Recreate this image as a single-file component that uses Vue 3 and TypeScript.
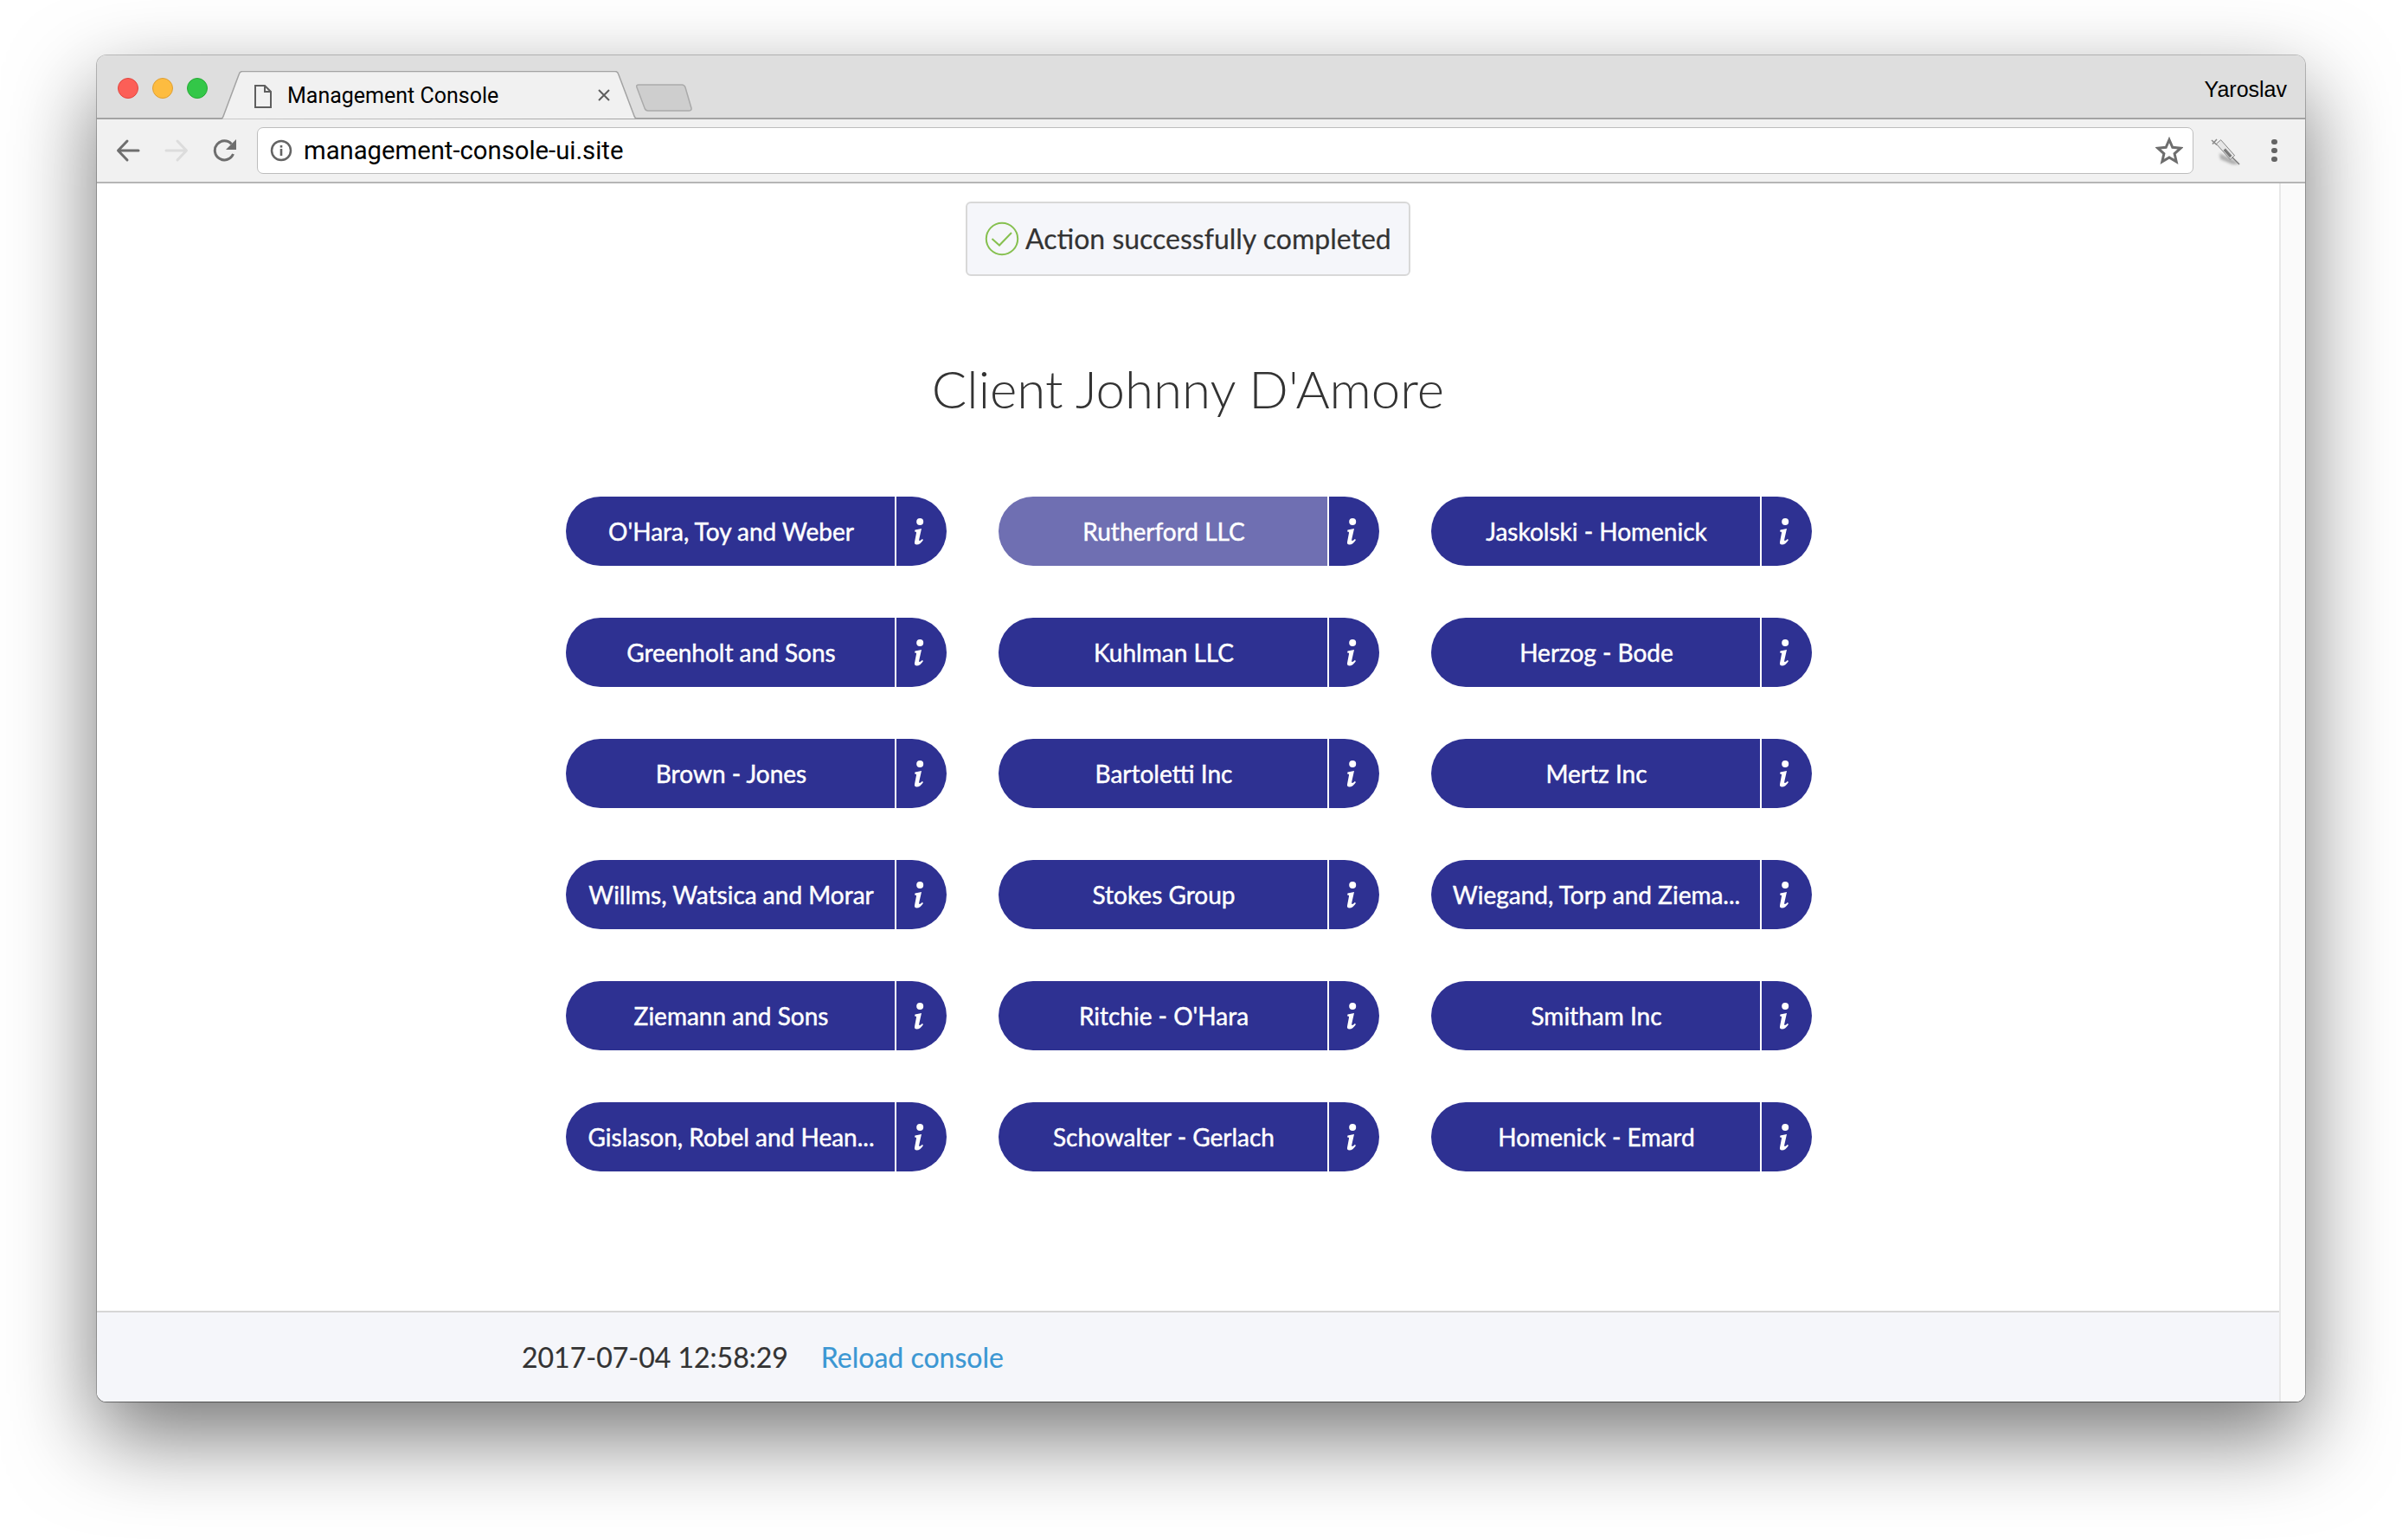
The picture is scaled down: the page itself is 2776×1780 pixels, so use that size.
<script setup lang="ts">
const clients: string[] = [
  "O'Hara, Toy and Weber", "Rutherford LLC", "Jaskolski - Homenick",
  "Greenholt and Sons", "Kuhlman LLC", "Herzog - Bode",
  "Brown - Jones", "Bartoletti Inc", "Mertz Inc",
  "Willms, Watsica and Morar", "Stokes Group", "Wiegand, Torp and Ziema...",
  "Ziemann and Sons", "Ritchie - O'Hara", "Smitham Inc",
  "Gislason, Robel and Hean...", "Schowalter - Gerlach", "Homenick - Emard",
]
</script>

<template>
  <div class="stage">
    <div class="window">
      <header class="tabbar">
        <div class="lights">
          <span class="light red"></span>
          <span class="light amber"></span>
          <span class="light green"></span>
        </div>
        <div class="tab">
          <svg class="tab-shape" viewBox="0 0 484 56" preserveAspectRatio="none">
            <path d="M0 55.5h2q2 0 3-3L23 4q1-3.500 4-3.500h428q3 0 4 3.500l18 48q1 3 3 3h4" fill="#f1f1f1" stroke="#a3a3a3" stroke-width="1.500"/>
          </svg>
          <svg class="file-icon" viewBox="0 0 20 27">
            <path d="M1 1h11l7 7v18H1zM12 1v7h7" fill="none" stroke="#5f5f5f" stroke-width="2"/>
          </svg>
          <span class="tab-title">Management Console</span>
          <svg class="tab-close" viewBox="0 0 14 14">
            <path d="M1 1l12 12M13 1L1 13" stroke="#5f5f5f" stroke-width="2"/>
          </svg>
        </div>
        <svg class="newtab" viewBox="0 0 66 32">
          <path d="M3 1h50q3 0 4 3l7 24q.5 3-3 3H14q-3 0-4-3L1 4Q0 1 3 1z" fill="#cecece" stroke="#aaa" stroke-width="1.500"/>
        </svg>
        <span class="user">Yaroslav</span>
      </header>

      <nav class="toolbar">
        <svg class="nav-icon" viewBox="0 0 28 28">
          <path d="M26 14H3M13 3L2.500 14 13 25" fill="none" stroke="#6e6e6e" stroke-width="3" stroke-linecap="round" stroke-linejoin="round"/>
        </svg>
        <svg class="nav-icon" viewBox="0 0 28 28">
          <path d="M2 14h23M15 3l10.500 11L15 25" fill="none" stroke="#dcdcdc" stroke-width="3" stroke-linecap="round" stroke-linejoin="round"/>
        </svg>
        <svg class="nav-icon" viewBox="0 0 28 28">
          <path d="M23.500 18a11 11 0 1 1-2-11.500" fill="none" stroke="#6e6e6e" stroke-width="3"/>
          <path d="M27 1v12H15z" fill="#6e6e6e"/>
        </svg>
        <div class="omnibox">
          <svg class="omni-info" viewBox="0 0 26 26">
            <circle cx="13" cy="13" r="11" fill="none" stroke="#646464" stroke-width="2.500"/>
            <rect x="11.700" y="11" width="2.600" height="8" fill="#646464"/>
            <rect x="11.700" y="7" width="2.600" height="2.600" fill="#646464"/>
          </svg>
          <span class="url">management-console-ui.site</span>
          <svg class="star" viewBox="0 0 32 32">
            <path d="M16 3.500l3.800 8.800 9.500.9-7.200 6.300 2.100 9.300L16 23.900l-8.200 4.900 2.100-9.300-7.200-6.300 9.500-.9z" fill="none" stroke="#6e6e6e" stroke-width="3" stroke-linejoin="miter"/>
          </svg>
        </div>
        <svg class="syringe" viewBox="0 0 55 48">
          <path class="syringe-shadow" d="M20 27l17 8 6 5-8 0-14-6z" fill="#999"/>
          <path d="M11 12l6 5.500M12 16.500l5-5.500" stroke="#8a8a8a" stroke-width="1.600" fill="none"/>
          <path d="M21.600 11.700L37.600 29.700 32.400 34.300 16.400 16.300z" fill="#e6e6e6" stroke="#777" stroke-width=".9"/>
          <path d="M27 21.500l7.500 8.500-2.500 2.200-7.500-8.500z" fill="#7a7a7a"/>
          <path d="M35 32l8 8" stroke="#777" stroke-width="1.300"/>
        </svg>
        <div class="menu"><span></span><span></span><span></span></div>
      </nav>

      <div class="viewport">
        <main class="page">
          <div class="content">
            <div class="alert">
              <svg class="tick" viewBox="0 0 40 40">
                <circle cx="20" cy="20" r="18.200" fill="none" stroke="#86c04f" stroke-width="2"/>
                <path d="M8.500 20l8.500 7.500L31 13" fill="none" stroke="#86c04f" stroke-width="2"/>
              </svg>
              <span class="alert-text">Action successfully completed</span>
            </div>
            <h1 class="title">Client Johnny D'Amore</h1>
            <div class="grid">
              <div v-for="name in clients" :key="name" class="client">
                <button class="client-name" :class="{ active: name === 'Rutherford LLC' }">{{ name }}</button>
                <button class="client-info" aria-label="Info">
                  <svg viewBox="0 0 12 31">
                    <circle cx="7.200" cy="4" r="4" fill="#fff"/>
                    <path d="M1.500 13.500L9 12 6.200 24.500Q5.900 26 6.800 26 8 26 9.800 24L11 25Q7.500 30.500 3.500 30.500 .5 30.500 1 27.500L3 17Q3.300 15.500 2 15.500H1z" fill="#fff"/>
                  </svg>
                </button>
              </div>
            </div>
          </div>
          <footer class="footer">
            <span class="stamp">2017-07-04 12:58:29</span>
            <a class="reload">Reload console</a>
          </footer>
        </main>
        <aside class="scrollbar"></aside>
      </div>
    </div>
  </div>
</template>

<style>
html, body { margin: 0; background: #fff; }
</style>

<style scoped>
.stage {
  width: 2776px;
  height: 1780px;
  padding: 64px 0 0 112px;
  box-sizing: border-box;
  overflow: hidden;
  background: #fff;
}
.window {
  width: 2552px;
  height: 1556px;
  display: flex;
  flex-direction: column;
  border-radius: 11px;
  overflow: hidden;
  box-shadow: 0 40px 100px 0 rgba(0, 0, 0, .54), 0 0 0 1px rgba(0, 0, 0, .22), 0 1px 1px rgba(0, 0, 0, .3);
  font-family: "Liberation Sans", Arial, sans-serif;
}
.tabbar {
  height: 74px;
  flex: none;
  display: flex;
  align-items: flex-start;
  background: #dedede;
  border-bottom: 2px solid #a3a3a3;
  box-sizing: border-box;
  position: relative;
}
.lights {
  display: flex;
  gap: 16px;
  padding: 26px 0 0 24px;
}
.light { width: 24px; height: 24px; border-radius: 50%; box-sizing: border-box; }
.red { background: #fc5f57; border: 1px solid #e2463f; }
.amber { background: #fdbc40; border: 1px solid #de9f34; }
.green { background: #33c748; border: 1px solid #27aa35; }
.tab {
  position: absolute;
  left: 141px;
  top: 18px;
  width: 487px;
  height: 56px;
  display: flex;
  align-items: center;
}
.tab-shape { position: absolute; inset: 0; width: 100%; height: 100%; }
.file-icon { position: relative; margin-left: 41px; width: 20px; height: 27px; margin-top: 2px; }
.tab-title {
  position: relative;
  margin-left: 18px;
  font: 25px "Roboto", "Liberation Sans", sans-serif;
  color: #000;
  white-space: nowrap;
}
.tab-close { position: absolute; right: 35px; top: 21px; width: 14px; height: 14px; }
.newtab { position: absolute; left: 623px; top: 33px; width: 66px; height: 32px; }
.user {
  position: absolute;
  right: 21px;
  top: 25px;
  font-size: 25px;
  color: #000;
}
.toolbar {
  height: 74px;
  flex: none;
  display: flex;
  align-items: center;
  background: #f1f1f1;
  border-bottom: 2px solid #b5b5b5;
  box-sizing: border-box;
  padding-left: 22px;
}
.nav-icon { width: 28px; height: 28px; margin-right: 28px; flex: none; }
.omnibox {
  width: 2238px;
  height: 54px;
  margin-left: -5px;
  display: flex;
  align-items: center;
  background: #fff;
  border: 1.500px solid #bdbdbd;
  border-radius: 7px;
  box-sizing: border-box;
  padding: 0 11px 0 14px;
}
.omni-info { width: 26px; height: 26px; flex: none; }
.url {
  margin-left: 13px;
  flex: 1;
  font: 29.250px "Roboto", "Liberation Sans", sans-serif;
  color: #000;
}
.star { width: 32px; height: 32px; flex: none; }
.syringe { width: 55px; height: 48px; margin-left: 10px; flex: none; }
.syringe-shadow { filter: blur(1.600px); opacity: .75; }
.menu {
  margin-left: 25px;
  display: flex;
  flex-direction: column;
  gap: 3.500px;
}
.menu span { width: 6.500px; height: 6.500px; border-radius: 50%; background: #646464; }
.viewport {
  flex: 1;
  min-height: 0;
  display: flex;
  background: #fff;
}
.page {
  flex: 1;
  min-width: 0;
  display: flex;
  flex-direction: column;
}
.content {
  flex: 1;
  display: flex;
  flex-direction: column;
  align-items: center;
  padding-top: 21px;
}
.alert {
  width: 514px;
  height: 86px;
  box-sizing: border-box;
  display: flex;
  align-items: center;
  gap: 7px;
  padding-left: 20px;
  background: #f5f6fa;
  border: 2px solid #d8d8d8;
  border-radius: 6px;
  font: 400 32px "Lato", sans-serif;
  color: #333;
  -webkit-text-stroke: .2px #333;
  white-space: nowrap;
}
.alert-text { padding-bottom: 2px; }
.tick { width: 40px; height: 40px; flex: none; }
.title {
  margin: 94px 0 0;
  font: 300 60px/1.2 "Lato", sans-serif;
  color: #333;
}
.grid {
  display: grid;
  grid-template-columns: repeat(3, 440px);
  column-gap: 60px;
  row-gap: 60px;
  margin-top: 89px;
  padding-left: 2px;
}
.client { display: flex; height: 80px; }
.client button {
  border: 0;
  height: 80px;
  padding: 0;
  color: #fff;
  background: #2e3192;
  font: 400 28px "Lato", sans-serif;
  -webkit-text-stroke: .45px #fff;
}
.client-name {
  width: 380px;
  padding-left: 2px !important;
  border-radius: 40px 0 0 40px;
  box-sizing: border-box;
  white-space: nowrap;
  text-align: center;
}
.client-name.active { background: #6f6fb2 !important; }
.client-info {
  width: 58px;
  margin-left: 2px;
  border-radius: 0 40px 40px 0;
  display: flex;
  align-items: center;
  padding: 0 0 0 20px !important;
  box-sizing: border-box;
}
.client-info svg { width: 12px; height: 31px; }
.footer {
  height: 105px;
  flex: none;
  box-sizing: border-box;
  border-top: 2px solid #d6d6d6;
  background: #f5f6fa;
  display: flex;
  align-items: center;
  gap: 38px;
  padding: 0 0 0 491px;
  font: 400 32px "Lato", sans-serif;
  -webkit-text-stroke: .2px currentColor;
}
.stamp { color: #333; }
.reload { color: #3b97d3; }
.scrollbar {
  width: 30px;
  flex: none;
  box-sizing: border-box;
  background: #fafafa;
  border-left: 2px solid #e8e8e8;
}
</style>
